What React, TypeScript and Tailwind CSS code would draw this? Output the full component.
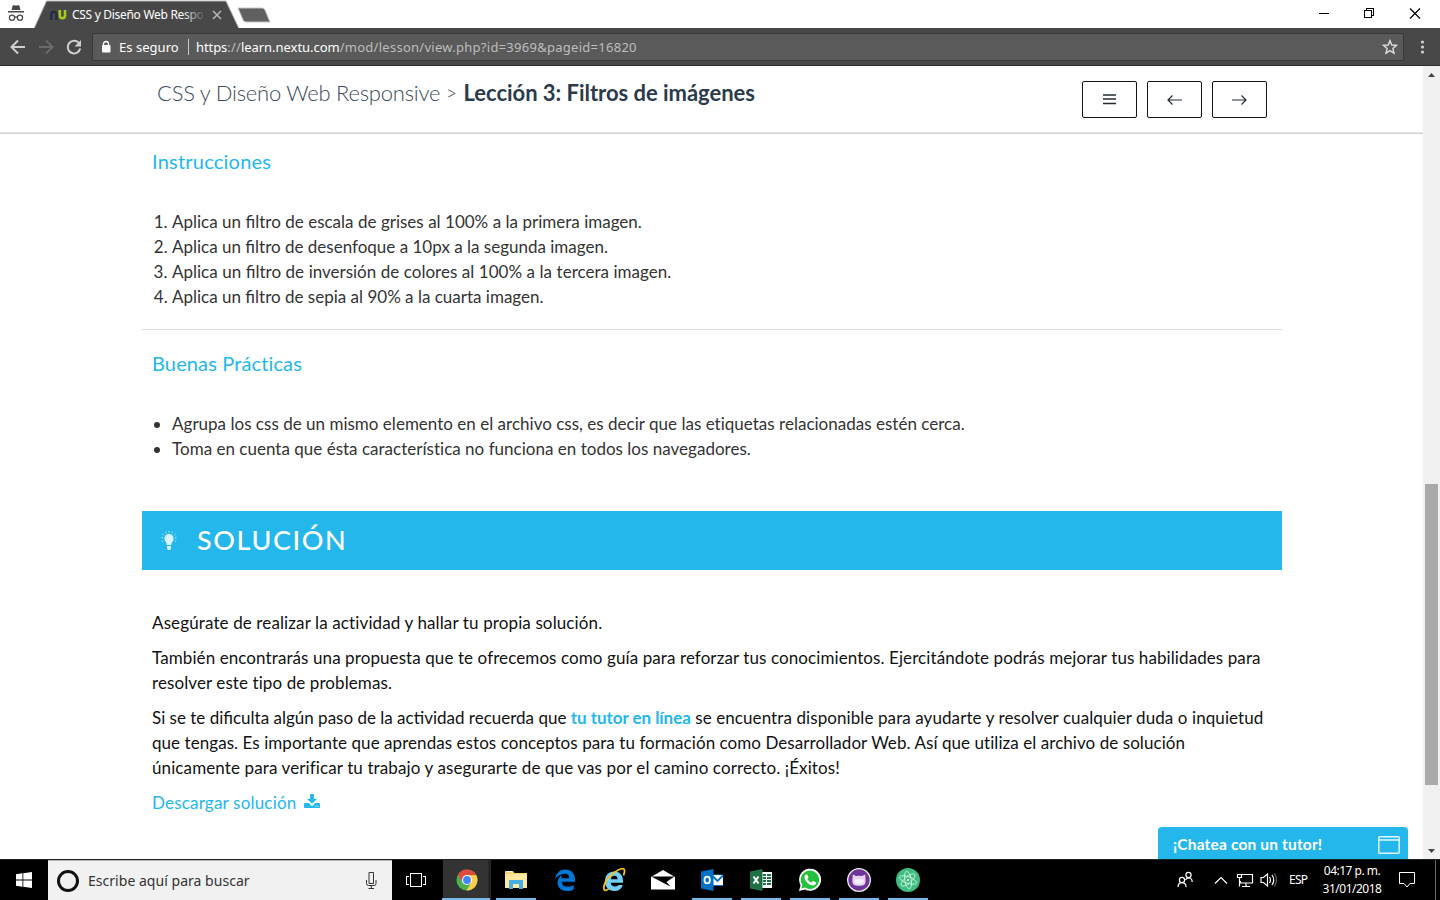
import type { ReactNode } from 'react';

const UI = "font-['Noto_Sans',sans-serif]";

function BrowserTabs() {
  return (
    <div className="relative flex h-[28px] shrink-0 bg-white">
      <svg className="h-[28px] w-[280px]" viewBox="0 0 280 28">
        <path d="M0 28.5H34L46.5 1H226L239 28.5H280" fill="#484848" stroke="#b4b8b4" strokeWidth="1" />
        <path d="M238 8h24q2 0 3 2l5 12h-24q-2 0-3-2z" fill="#606060" stroke="#c4c4c4" strokeWidth="1" />
        <g fill="#484848">
          <path d="M11.5 10L12.8 5.2h1.8l1.4.6 1.4-.6h1.8l1.3 4.8zM8 11h16v1.4H8z" />
        </g>
        <g fill="none" stroke="#484848" strokeWidth="1.2">
          <circle cx="12" cy="17.8" r="2.6" />
          <circle cx="20" cy="17.8" r="2.6" />
          <path d="M14.6 17.4q1.4-1 2.8 0" />
        </g>
        <path d="M51.2 20v-5.5a2.6 2.6 0 0 1 5.2 0V20" fill="none" stroke="#222d4a" strokeWidth="2.4" />
        <path d="M59.8 10v5.6a2.6 2.6 0 0 0 5.2 0V10" fill="none" stroke="#a2d018" strokeWidth="2.6" />
        <path d="M213 11l8 8m0-8l-8 8" stroke="#b8b8b8" strokeWidth="1.5" />
      </svg>
      <div className={`absolute left-[72px] top-[6px] w-[134px] whitespace-nowrap text-[12px] leading-[18px] tracking-[-0.3px] text-white ${UI}`}>
        CSS y Diseño Web Respo
        <div className="absolute inset-y-0 right-0 w-[24px] bg-gradient-to-r from-transparent to-[#484848]" />
      </div>
      <svg className="ml-auto h-[28px] w-[140px]" viewBox="0 0 140 28" fill="none" stroke="#000" shapeRendering="crispEdges">
        <path d="M19 13.5h10M64.500 10.500h7v7h-7zM66.500 10v-1.500h7v7h-1.500" />
        <path d="M110 8.500l10 10M120 8.500l-10 10" shapeRendering="auto" strokeWidth="1.200" />
      </svg>
    </div>
  );
}

function Toolbar() {
  return (
    <div className="flex h-[38px] shrink-0 items-center border-b border-t border-b-[#2b2b2b] border-t-[#484848] bg-[#484848]">
      <svg className="h-[36px] w-[92px] shrink-0" viewBox="0 29 92 36" fill="none" strokeWidth="2">
        <path d="M25 47H12m6-6.500L11.500 47l6.500 6.500" stroke="#d0d0d0" />
        <path d="M39 47h13m-6-6.500l6.500 6.500-6.500 6.500" stroke="#6a6a6a" />
        <path d="M79.200 43.500A6.300 6.300 0 1 0 80.200 48.500" stroke="#d0d0d0" />
        <path d="M81 40v6.500h-6.500z" fill="#d0d0d0" />
      </svg>
      <div className={`flex h-[28px] w-[1312px] shrink-0 items-center rounded-[2px] border border-[#383838] bg-[#5a5a5a] text-[13px] leading-[18px] text-white ${UI}`}>
        <svg className="ml-[8px] h-[14px] w-[10px]" viewBox="0 0 10 14">
          <path d="M2.500 7V4a2.500 2.500 0 0 1 5 0v3" fill="none" stroke="#fff" strokeWidth="1.400" />
          <rect x="1" y="5" width="8.500" height="7.500" rx="1" fill="#fff" />
        </svg>
        <span className="ml-[8px] w-[69px] whitespace-nowrap tracking-[0.03px]">Es seguro</span>
        <span className="mr-[7px] h-[16px] w-px bg-[#c8c8c8]" />
        <span className="whitespace-nowrap tracking-[0.17px] text-[#bdbdbd]">
          <span className="tracking-[-0.08px] text-white">https</span>://<span className="tracking-[-0.04px] text-white">learn.nextu.com</span><span className="tracking-[0.27px]">/mod/lesson/view.php?id=3969&amp;pageid=16820</span>
        </span>
        <svg className="ml-auto mr-[5px] h-[16px] w-[16px]" viewBox="0 0 16 16">
          <path d="M8 1.700l1.800 4.300 4.700.4-3.600 3.100 1.100 4.700L8 11.700l-4 2.500 1.100-4.700L1.500 6.400 6.200 6z" fill="none" stroke="#ddd" strokeWidth="1.400" />
        </svg>
      </div>
      <svg className="ml-[16px] h-[16px] w-[6px]" viewBox="0 0 6 16" fill="#d0d0d0">
        <circle cx="2.500" cy="3" r="1.600" />
        <circle cx="2.500" cy="8" r="1.600" />
        <circle cx="2.500" cy="13" r="1.600" />
      </svg>
    </div>
  );
}

function NavButton({ children }: { children: ReactNode }) {
  return (
    <button className="flex h-[37px] w-[55px] items-center justify-center rounded-[2px] border border-[#10161c]">
      <svg className="h-[17px] w-[17px]" viewBox="0 0 17 17" fill="none" stroke="#222c33">{children}</svg>
    </button>
  );
}

function LessonHeader() {
  return (
    <header className="flex h-[67px] shrink-0 justify-between border-b border-[#dedede] pl-[157px] pr-[156px] shadow-[0_1px_1px_rgba(0,0,0,0.14)]">
      <h1 className="flex whitespace-nowrap pt-[12px] text-[22px] leading-[30px] text-[#2b3b4b]">
        <span className="w-[289px] font-light tracking-[-0.24px] text-[#3b4a59]">CSS y Diseño Web Responsive</span>
        <span className="w-[17.500px] text-[19px] font-light">&gt;</span>
        <span className="font-bold tracking-[-0.03px]">Lección 3: Filtros de imágenes</span>
      </h1>
      <nav className="flex gap-[10px] pt-[15px]">
        <NavButton><path d="M2 4h13M2 8h13M2 12.500h13" strokeWidth="1.500" /></NavButton>
        <NavButton><path d="M2 9h14M6.500 4.500L2 9l4.500 4.500" strokeWidth="1.200" /></NavButton>
        <NavButton><path d="M1 9h14M10.500 4.500L15 9l-4.500 4.500" strokeWidth="1.200" /></NavButton>
      </nav>
    </header>
  );
}

function Lesson() {
  return (
    <main className="ml-[142px] w-[1140px] text-[17px] leading-[25px] text-[#333]">
      <h2 className="pl-[10px] pt-[13px] text-[20px] leading-[30px] tracking-[0.22px] text-[#23b7eb]">Instrucciones</h2>
      <ol className="mt-[33px] list-decimal whitespace-nowrap pl-[30px]">
        <li className="[word-spacing:0.08px]">Aplica un filtro de escala de grises al 100% a la primera imagen.</li>
        <li>Aplica un filtro de desenfoque a 10px a la segunda imagen.</li>
        <li className="[word-spacing:0.2px]">Aplica un filtro de inversión de colores al 100% a la tercera imagen.</li>
        <li>Aplica un filtro de sepia al 90% a la cuarta imagen.</li>
      </ol>
      <hr className="mt-[20px] border-[#ddd]" />
      <h2 className="mt-[18px] pl-[10px] text-[20px] leading-[30px] tracking-[0.13px] text-[#23b7eb]">Buenas Prácticas</h2>
      <ul className="mt-[33px] list-disc whitespace-nowrap pl-[30px] tracking-[0.015px]">
        <li>Agrupa los css de un mismo elemento en el archivo css, es decir que las etiquetas relacionadas estén cerca.</li>
        <li>Toma en cuenta que ésta característica no funciona en todos los navegadores.</li>
      </ul>
      <div className="mt-[50px] flex h-[59px] items-center bg-[#23b7eb] text-white">
        <svg className="ml-[19px] h-[20px] w-[16px]" viewBox="0 0 16 20" fill="#d7f3fd">
          <path d="M8 3a4.600 4.600 0 0 0-4.600 4.600c0 2.800 2.200 3.500 2.400 6.400h4.400c.2-2.900 2.400-3.600 2.400-6.400A4.600 4.600 0 0 0 8 3zM6 15h4v2.500l-1 1.500H7l-1-1.500z" />
          <path d="M8 0v1.500M4.500.8l.6 1.300M11.500.8l-.6 1.300M1.500 3l1.300 1M14.500 3l-1.300 1M.5 6.800H2M14 6.800h1.500M1 10.500l1.300-.7M15 10.500l-1.300-.7" stroke="#bdeafb" />
        </svg>
        <h2 className="mb-[2px] ml-[20px] text-[27px] font-medium leading-[40px] tracking-[1.600px]">SOLUCIÓN</h2>
      </div>
      <div className="flex flex-col gap-[10px] whitespace-nowrap pl-[10px] pt-[40px] text-[#111]">
        <p className="tracking-[0.12px]">Asegúrate de realizar la actividad y hallar tu propia solución.</p>
        <p className="tracking-[0.09px]">También encontrarás una propuesta que te ofrecemos como guía para reforzar tus conocimientos. Ejercitándote podrás mejorar tus habilidades para<br />resolver este tipo de problemas.</p>
        <p>
          <span>Si se te dificulta algún paso de la actividad recuerda que </span>
          <b className="tracking-[-0.04px] text-[#23b7eb]">tu tutor en línea</b>
          <span className="tracking-[0.09px]"> se encuentra disponible para ayudarte y resolver cualquier duda o inquietud</span><br />
          <span className="tracking-[0.06px]">que tengas. Es importante que aprendas estos conceptos para tu formación como Desarrollador Web. Así que utiliza el archivo de solución</span><br />
          <span className="tracking-[0.11px]">únicamente para verificar tu trabajo y asegurarte de que vas por el camino correcto. ¡Éxitos!</span>
        </p>
        <p className="flex items-center gap-[8px] tracking-[0.19px] text-[#23b7eb]">Descargar solución
          <svg className="mb-[2px] h-[15px] w-[16px]" viewBox="0 0 17 16" fill="#23b7eb">
            <path d="M6.500 0h4v5H14L8.500 10.500 3 5h3.500zM1 9.500h4L8.500 13 12 9.500h4q1 0 1 1V14q0 1-1 1H1q-1 0-1-1v-3.500q0-1 1-1zM12 12.500v1h1v-1zm2.300 0v1h1v-1z" fillRule="evenodd" />
          </svg>
        </p>
      </div>
    </main>
  );
}

function Scrollbar() {
  return (
    <div className="flex w-[17px] shrink-0 flex-col items-center bg-[#f0f0f0]">
      <svg className="h-[17px] w-[17px]" viewBox="0 0 17 17"><path d="M5 11l3.500-4L12 11z" fill="#444" /></svg>
      <div className="mt-[401px] h-[301px] w-[13px] bg-[#a9a9a9]" />
      <svg className="mt-auto h-[17px] w-[17px]" viewBox="0 0 17 17"><path d="M5 7l3.500 4 3.500-4z" fill="#444" /></svg>
    </div>
  );
}

function TaskIcon({ children, open = false }: { children: ReactNode; open?: boolean }) {
  return (
    <div className="flex h-full w-[49px] flex-col items-center">
      <svg className="mt-[8px] h-[24px] w-[24px]" viewBox="0 0 24 24">{children}</svg>
      {open && <div className="mt-auto h-[2px] w-[40px] bg-[#76b9ed]" />}
    </div>
  );
}

function Taskbar() {
  return (
    <footer className={`flex h-[41px] shrink-0 border-t border-[#1c2420] bg-black text-white ${UI}`}>
      <div className="flex w-[48px] items-center justify-center">
        <svg className="h-[16px] w-[16px]" viewBox="0 0 16 16" fill="#fff"><path d="M0 2.200L6.500 1.300v6.200H0zM7.300 1.200L16 0v7.500H7.300zM0 8.400h6.500v6.300L0 13.800zM7.300 8.400H16V16l-8.700-1.200z" /></svg>
      </div>
      <div className="flex w-[344px] items-center border-t border-[#b5b5b5] bg-[#f1f1f1]">
        <div className="ml-[9px] h-[22px] w-[22px] rounded-full border-[3px] border-[#111]" />
        <span className="ml-[9px] whitespace-nowrap text-[14px] leading-[20px] tracking-[0.03px] text-[#333]">Escribe aquí para buscar</span>
        <svg className="ml-auto mr-[14px] h-[17px] w-[13px]" viewBox="0 0 13 17" fill="none" stroke="#333">
          <path d="M4 .5h4.500v11H4zM1.500 8v3.500q0 2 2 2H9q2 0 2-2V8M6.250 13.500v3M3.500 16.500h5.500" />
        </svg>
      </div>
      <div className="flex w-[51px] items-center pl-[14px]">
        <svg className="h-[15px] w-[21px]" viewBox="0 0 21 15" fill="none" stroke="#fff" shapeRendering="crispEdges"><path d="M4.500.5h11v13h-11zM3 3.500H.5v8H3M17 3.500h2.500v8H17" /></svg>
      </div>
      <div className="flex w-[48px] flex-col items-center border-r-[3px] border-[#252525] bg-[#333]">
        <svg className="ml-[3px] mt-[9px] h-[22px] w-[22px]" viewBox="0 0 24 24">
          <circle cx="12" cy="12" r="11.500" fill="#4caf50" />
          <path d="M2 6.200A11.500 11.500 0 0 1 22.200 6.800H12L7 14.500z" fill="#dd4b3e" />
          <path d="M12 6.800h10.200A11.500 11.500 0 0 1 11.500 23.500L17 14.500z" fill="#ffce44" />
          <circle cx="12" cy="12" r="5.500" fill="#fff" /><circle cx="12" cy="12" r="4.300" fill="#4285f4" />
        </svg>
        <div className="mt-auto h-[2px] w-[48px] bg-[#76b9ed]" />
      </div>
      <TaskIcon open>
        <path d="M1 3h8l1.500 2H23v15H1z" fill="#f6d06a" /><path d="M1 6h22v14H1z" fill="#ffe9a0" />
        <path d="M5 13q0-1 1-1h12q1 0 1 1v8h-4v-5H9v5H5z" fill="#45aee5" /><path d="M3 3.700h5" stroke="#fff" />
      </TaskIcon>
      <TaskIcon>
        <path d="M2.200 11C3 4.500 7.500 1.500 12.200 1.500c6 0 9.800 4.200 9.800 9.700v2.500H8.700c.2 3.700 3.300 5 6.300 5 2 0 4.200-.7 5.700-1.700v4.500c-2 1-4 1.500-6.400 1.500-6 0-9.700-3.500-9.700-8.500 0-3.500 1.800-6 4.800-7.500-.7 1-1 2-1 3.300h7.900c0-3-1.500-4.600-4.300-4.600-4 0-7.300 2-9.800 5.300z" fill="#0078d7" />
      </TaskIcon>
      <TaskIcon>
        <path d="M3 13c0-5.800 3.800-9.500 9.200-9.500 6 0 9.300 4.200 8.800 11.300H8.800c.3 2.500 1.700 3.800 4 3.800 1.700 0 2.800-.6 3.500-1.700h4.500c-1.400 4-4.200 6.100-8.300 6.100C6.700 23 3 19.300 3 13zm5.800-1.700h6.900c-.2-2.500-1.400-3.600-3.300-3.600s-3.300 1.100-3.600 3.600z" fill="#72d0fa" fillRule="evenodd" />
        <path d="M21.500 7.500c1.400-3.800 1.500-6 .1-6.600C18.500-.4 7.500 6.500 3.500 14c-2 4.300-2.300 7.700-.6 8.300.9.300 2.500-.5 4-1.700" fill="none" stroke="#f6c31b" strokeWidth="1.800" />
      </TaskIcon>
      <TaskIcon>
        <path d="M0 9L12 2l12 7v12.500H0z" fill="#fff" /><path d="M.3 8.500h23.200L15.500 14l4 4.500L12.500 15z" fill="#000" />
      </TaskIcon>
      <TaskIcon open>
        <path d="M12 6.500h11V18H12z" fill="#0072c6" /><path d="M13 7h10v10H13z" fill="#fff" /><path d="M13 8.500l4.500 4.500L23 7.500" fill="none" stroke="#0072c6" strokeWidth="1.800" /><path d="M1 3.500L13.500 1v22L1 20.500z" fill="#0072c6" /><ellipse cx="7.200" cy="12" rx="2.700" ry="3.400" fill="none" stroke="#fff" strokeWidth="1.800" />
      </TaskIcon>
      <TaskIcon open>
        <path d="M12 4h11v16H12z" fill="#fff" /><path d="M14 6h3v2h-3zm4 0h4v2h-4zm-4 3h3v2h-3zm4 0h4v2h-4zm-4 3h3v2h-3zm4 0h4v2h-4zm-4 3h3v2h-3zm4 0h4v2h-4z" fill="#1e7145" /><path d="M1 3.500L13.500 1v22L1 20.500z" fill="#1e7145" /><path d="M4.500 8.500l5 7m0-7l-5 7" stroke="#fff" strokeWidth="2" />
      </TaskIcon>
      <TaskIcon open>
        <path d="M1 23l1.600-5.800A11 11 0 1 1 7 21.400z" fill="#fff" /><path d="M3.300 20.600l1-3.700a9.200 9.200 0 1 1 2.800 2.700z" fill="#25c13c" />
        <path d="M8.500 6.300c-.7 0-2 1-2 2.600 0 4 4.500 8.500 8.500 8.500 2 0 3-1.500 3-2.700 0-.5-2.600-1.700-3-1.700-.5 0-1 1.500-1.600 1.500-.8 0-3.800-2.500-4-3.500 0-.5 1-1.200 1-1.600 0-.5-1-3.100-1.900-3.100z" fill="#fff" />
      </TaskIcon>
      <TaskIcon open>
        <circle cx="12" cy="12" r="11.300" fill="#70359b" stroke="#eee" strokeWidth="1.300" />
        <path d="M5.800 6.500l3.200 1.600q3-.6 6 0l3.200-1.600.3 4.200q.7 5.500-2.300 6.500-4.200 1.200-8.400 0-3-1-2.300-6.500z" fill="#e3d2e9" /><path d="M7.500 11.500q4.500-1 9 0 1 3.500-1.500 4-3 .6-6 0-2.500-.5-1.500-4z" fill="#f6eef8" />
      </TaskIcon>
      <TaskIcon open>
        <circle cx="12" cy="12" r="12" fill="#40bd80" />
        <g fill="none" stroke="#d5f7e6" strokeWidth=".8"><ellipse cx="12" cy="12" rx="8.800" ry="3.300" transform="rotate(20 12 12)" /><ellipse cx="12" cy="12" rx="8.800" ry="3.300" transform="rotate(80 12 12)" /><ellipse cx="12" cy="12" rx="8.800" ry="3.300" transform="rotate(140 12 12)" /></g><circle cx="12" cy="12" r="1.100" fill="#fff" />
      </TaskIcon>
      <svg className="ml-auto h-[40px] w-[112px]" viewBox="1170 860 112 40" fill="none" stroke="#fff" strokeWidth="1.200">
        <circle cx="1182" cy="880" r="2.600" /><circle cx="1188.500" cy="875" r="2.600" /><path d="M1178 887q0-4.300 4-4.300t4 4.300M1185.500 880q1-2 3.200-2 3.500 0 3.500 4" />
        <path d="M1215 883.500l6-6 6 6" />
        <path d="M1242 874.500h10.500v8.500h-12v-2M1246 883v3.500m-4 0h8M1237.500 874.500h4v3h-4zM1239.500 877.500v9" />
        <path d="M1261 877.500h2.500l4-3.500v12l-4-3.500H1261zM1269.500 877q2 3 0 6M1272 875q3.500 5 0 10" /><path d="M1274.500 873.500q4 6.500 0 13" stroke="#666" />
      </svg>
      <span className="ml-[7px] flex w-[34px] items-center whitespace-nowrap text-[12px] tracking-[-0.7px]">ESP</span>
      <div className="flex w-[59px] flex-col items-center whitespace-nowrap pr-px pt-[2px] text-[12px] leading-[18px] tracking-[-0.5px]"><span>04:17 p. m.</span><span>31/01/2018</span></div>
      <svg className="ml-[17px] mt-[12px] h-[17px] w-[17px]" viewBox="0 0 17 17" fill="none" stroke="#fff"><path d="M.5.5h15v11H11L8 15l-3-3.500H.5z" /></svg>
      <div className="ml-[19px] mr-[4px] w-px bg-[#666]" />
    </footer>
  );
}

export default function App() {
  return (
    <div className="flex h-[900px] w-[1440px] flex-col overflow-hidden bg-white font-['Lato',sans-serif]">
      <BrowserTabs />
      <Toolbar />
      <div className="relative flex h-[793px] shrink-0">
        <div className="flex w-[1423px] shrink-0 flex-col">
          <LessonHeader />
          <Lesson />
        </div>
        <Scrollbar />
        <div className="absolute bottom-0 right-[32px] flex h-[32px] w-[250px] items-center justify-between rounded-t-[4px] bg-[#23b7eb] pl-[15px] pr-[8px] pt-[3px] text-[15.500px] font-bold text-white">
          <span className="whitespace-nowrap tracking-[0.17px]">¡Chatea con un tutor!</span>
          <svg className="h-[18px] w-[22px]" viewBox="0 0 22 18" fill="none" stroke="#e3f8ff" strokeWidth="1.500"><rect x=".8" y=".8" width="20.400" height="16.400" rx="1" /><path d="M1 4h20" /></svg>
        </div>
      </div>
      <Taskbar />
    </div>
  );
}
